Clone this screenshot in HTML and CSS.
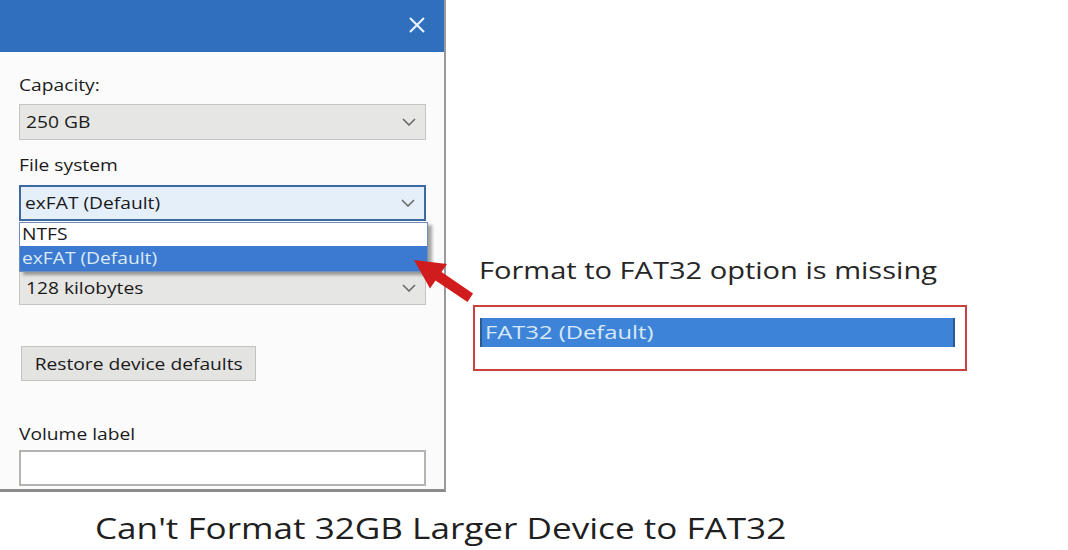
FILE: index.html
```html
<!DOCTYPE html>
<html>
<head>
<meta charset="utf-8">
<link rel="stylesheet" href="styles.css">
</head>
<body>
<div class="page">
  <div class="top">
    <div class="dialog">
      <div class="titlebar">
        <svg class="close" width="20" height="20" viewBox="0 0 20 20"><path d="M3 3L17 17M17 3L3 17" stroke="#e8f0fa" stroke-width="2.2" fill="none"/></svg>
      </div>
      <div class="body">
        <div class="label first"><span class="t">Capacity:</span></div>
        <div class="select grey"><span class="t">250 GB</span><svg class="chev" width="14" height="8" viewBox="0 0 14 8"><path d="M1 1L7 7L13 1" stroke="#666" stroke-width="1.5" fill="none"/></svg></div>
        <div class="label"><span class="t">File system</span></div>
        <div class="fs-wrap">
          <div class="select focus"><span class="t">exFAT (Default)</span><svg class="chev" width="14" height="8" viewBox="0 0 14 8"><path d="M1 1L7 7L13 1" stroke="#666" stroke-width="1.5" fill="none"/></svg></div>
          <div class="dropdown">
            <div class="opt"><span class="t">NTFS</span></div>
            <div class="opt sel"><span class="t">exFAT (Default)</span></div>
          </div>
        </div>
        <div class="spacer"></div>
        <div class="select grey small"><span class="t">128 kilobytes</span><svg class="chev" width="14" height="8" viewBox="0 0 14 8"><path d="M1 1L7 7L13 1" stroke="#666" stroke-width="1.5" fill="none"/></svg></div>
        <div class="btn"><span class="t c">Restore device defaults</span></div>
        <div class="label vol"><span class="t">Volume label</span></div>
        <div class="input"></div>
      </div>
    </div>
    <div class="right">
      <div class="missing"><span class="t wide">Format to FAT32 option is missing</span></div>
      <div class="redbox">
        <div class="fatbar"><span class="t fat">FAT32 (Default)</span></div>
      </div>
    </div>
  </div>
  <div class="caption"><span class="t cap">Can't Format 32GB Larger Device to FAT32</span></div>
  <svg class="arrow" width="75" height="60" viewBox="0 0 75 60"><polygon points="9,10 42,14 36.5,22 68,43.5 62.5,52 30.5,30.5 25,38.5" fill="#d01c1c"/></svg>
</div>
</body>
</html>
```

FILE: styles.css
```css
html, body {
  margin: 0;
  padding: 0;
  background: #ffffff;
}
.page {
  position: relative;
  width: 1068px;
  height: 550px;
  overflow: hidden;
  font-family: "Open Sans", "Noto Sans", sans-serif;
}
.t {
  display: inline-block;
  white-space: nowrap;
  transform: scaleX(1.2);
  transform-origin: left center;
}
.t.c {
  transform-origin: center center;
}
.top {
  display: flex;
  align-items: flex-start;
}
.dialog {
  width: 444px;
  height: 489px;
  background: #fbfbfb;
  border-right: 2px solid #9a9a9a;
  border-bottom: 3px solid #8c8c8c;
  box-sizing: content-box;
  flex: none;
}
.titlebar {
  height: 52px;
  background: #2f6fbc;
  display: flex;
  justify-content: flex-end;
  align-items: center;
  padding-right: 17px;
}
.close {
  display: block;
  margin-top: -2px;
}
.body {
  padding: 0 18px 0 19px;
  color: #1a1a1a;
  font-size: 16px;
  font-weight: 500;
}
.label {
  height: 20px;
  line-height: 20px;
  margin-top: 15px;
  margin-bottom: 10px;
}
.label.first {
  margin-top: 23px;
  margin-bottom: 9px;
}
.select {
  height: 34px;
  box-sizing: border-box;
  display: flex;
  align-items: center;
  justify-content: space-between;
  padding: 0 9px 0 6px;
  font-size: 16px;
  color: #1a1a1a;
}
.select.grey {
  height: 36px;
  background: #e6e6e4;
  border: 1px solid #c4c4c2;
}
.select.small {
  height: 34px;
}
.select.focus {
  height: 36px;
  margin-top: 2px;
  background: #e4effa;
  border: 2px solid #3c6aa0;
  padding-left: 4px;
}
.chev {
  display: block;
}
.fs-wrap {
  position: relative;
}
.dropdown {
  position: absolute;
  left: 0;
  top: 37px;
  width: 407px;
  border: 1px solid #6f8fb8;
  background: #fff;
  box-shadow: 4px 3px 3px rgba(0,0,0,0.35);
  z-index: 2;
}
.opt {
  height: 23px;
  line-height: 23px;
  padding-left: 2px;
  font-size: 16px;
  color: #1a1a1a;
}
.opt.sel {
  height: 25px;
  line-height: 25px;
  background: #3b7ad0;
  color: #dce9f8;
}
.spacer {
  height: 50px;
}
.btn {
  margin-top: 41px;
  margin-left: 2px;
  width: 235px;
  height: 35px;
  box-sizing: border-box;
  background: #e3e3e1;
  border: 1px solid #c2c2c0;
  display: flex;
  align-items: center;
  justify-content: center;
  font-size: 16px;
  color: #1a1a1a;
}
.label.vol {
  margin-top: 43px;
  margin-bottom: 6px;
}
.input {
  height: 36px;
  box-sizing: border-box;
  background: #fff;
  border: 2px solid #b4b4b0;
}
.right {
  padding-top: 254px;
  padding-left: 27px;
  flex: none;
}
.missing {
  font-size: 24px;
  line-height: 32px;
  color: #262626;
  font-weight: 500;
  margin-left: 6px;
}
.t.wide {
  transform: scaleX(1.21);
}
.redbox {
  margin-top: 19px;
  width: 494px;
  height: 66px;
  box-sizing: border-box;
  border: 2px solid #c8413e;
  padding: 11px 10px 0 5px;
}
.fatbar {
  height: 29px;
  line-height: 28px;
  background: #3d84d8;
  border-left: 2px solid #2a5a90;
  border-right: 2px solid #2a5a90;
  color: #d8e8f8;
  font-size: 19px;
  padding-left: 3px;
}
.t.fat {
  transform: scaleX(1.25);
}
.caption {
  margin-top: 16px;
  margin-left: 95px;
  font-size: 30px;
  line-height: 40px;
  color: #1f1f1f;
  font-weight: 500;
}
.t.cap {
  transform: scaleX(1.17);
}
.arrow {
  position: absolute;
  left: 405px;
  top: 250px;
  z-index: 3;
}
```
